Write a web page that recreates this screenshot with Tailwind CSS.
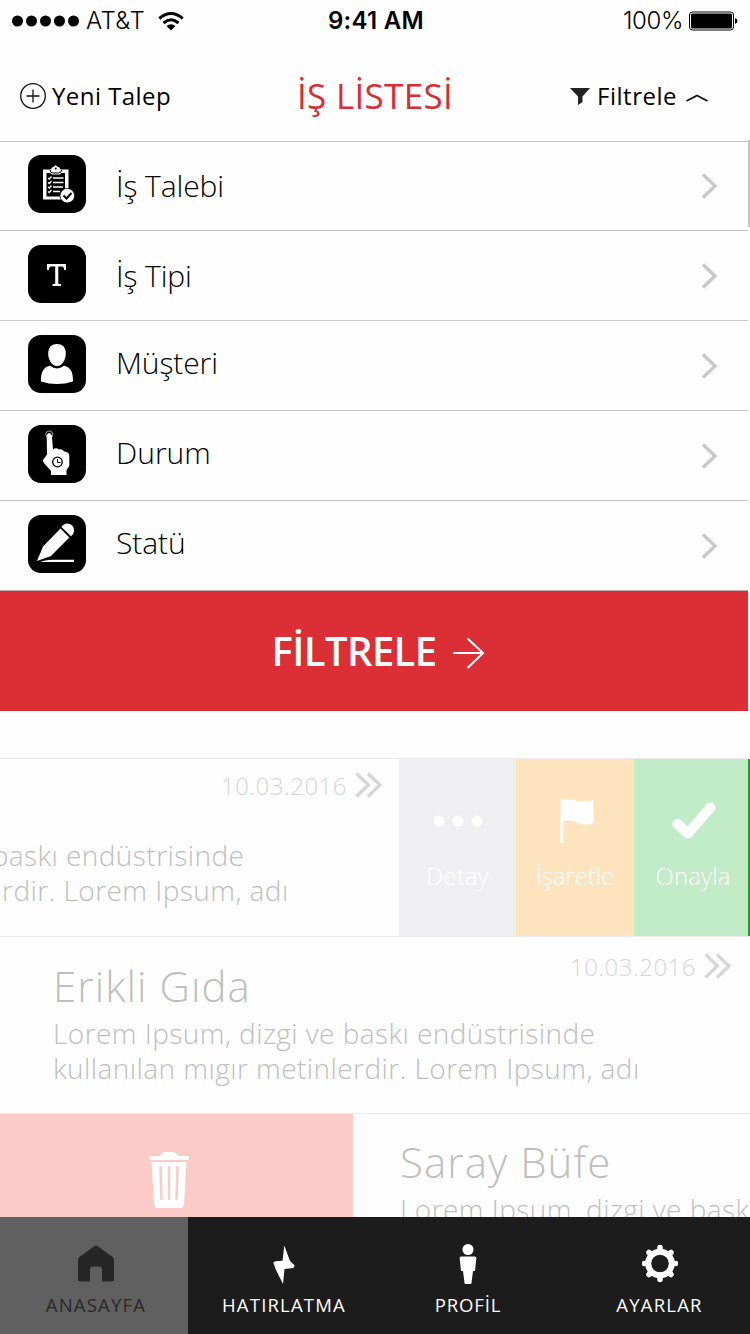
<!DOCTYPE html>
<html lang="tr">
<head>
    <meta charset="UTF-8">
    <meta name="viewport" content="width=device-width, initial-scale=1.0">
    <title>İş Listesi</title>
    <script src="https://cdn.jsdelivr.net/npm/@tailwindcss/browser@4"></script>
</head>
<body class="bg-white font-['Open_Sans',sans-serif] text-black">
    <div class="w-[750px] h-[1334px] flex flex-col overflow-hidden bg-[#fefefe]">

        <!-- Status bar -->
        <div class="h-10 shrink-0 grid grid-cols-3 items-center pt-0.5 pl-3 pr-3 font-['Inter',sans-serif] text-2xl">
            <div class="flex items-center">
                <svg class="w-[68px] h-3" viewBox="0 0 68 12">
                    <circle cx="5.5" cy="6" r="5.5"/><circle cx="19.5" cy="6" r="5.5"/><circle cx="33.5" cy="6" r="5.5"/><circle cx="47.5" cy="6" r="5.5"/><circle cx="61.5" cy="6" r="5.5"/>
                </svg>
                <span class="ml-1.5 font-[350] tracking-[0.4px]">AT&amp;T</span>
                <svg class="ml-[13px] w-[26px] h-5" viewBox="0 0 26 20" fill="none" stroke="#000" stroke-width="3">
                    <path d="M1.3 7.5 Q13 -2.5 24.7 7.5"/>
                    <path d="M5.5 12 Q13 5.5 20.5 12"/>
                    <path d="M8.5 15 Q13 11.5 17.5 15 L13 19.5 Z" fill="#000" stroke="none"/>
                </svg>
            </div>
            <div class="pl-0.5 text-center font-semibold tracking-[0.3px]">9:41 AM</div>
            <div class="flex items-center justify-end">
                <span class="font-[350] tracking-[-0.4px]">100%</span>
                <svg class="ml-1.5 w-[49px] h-5" viewBox="0 0 49 20">
                    <rect x="0.5" y="1" width="44" height="18" rx="3" fill="none" stroke="#000"/>
                    <rect x="2" y="2.5" width="41" height="15" rx="1.5"/>
                    <path d="M46 7 Q48.5 8 48.5 10 Q48.5 12 46 13 Z"/>
                </svg>
            </div>
        </div>

        <!-- Header -->
        <div class="h-[102px] shrink-0 grid grid-cols-[1fr_auto_1fr] items-center pl-5 pr-10 pt-[11px] border-b border-[#c6c6c6] w-[748px]">
            <div class="flex items-center">
                <svg class="w-[26px] h-[26px]" viewBox="0 0 26 26" fill="none" stroke="#111" stroke-width="1.3">
                    <circle cx="13" cy="13" r="12.3"/><path d="M13 6.5V19.5M6.5 13H19.5"/>
                </svg>
                <span class="ml-1.5 text-2xl font-medium tracking-[0.45px] whitespace-nowrap">Yeni Talep</span>
            </div>
            <h1 class="pl-[22px] text-center text-[35px] font-medium tracking-[0.3px] text-[#dc2b35] whitespace-nowrap">İŞ LİSTESİ</h1>
            <div class="flex items-center justify-end">
                <svg class="w-5 h-[17px]" viewBox="0 0 20 17" fill="#222"><path d="M0 0H20L12.5 8.5V14L8 17V8.5Z"/></svg>
                <span class="ml-[7px] text-2xl font-medium tracking-[0.5px]">Filtrele</span>
                <svg class="ml-[9px] mt-1 w-[22px] h-2" viewBox="0 0 22 8" fill="none" stroke="#111" stroke-width="1.8"><path d="M0.5 7L11 1.5L21.5 7"/></svg>
            </div>
        </div>

        <!-- Filter options -->
        <div class="relative shrink-0">
            <div class="w-[748px] text-[30px] font-light tracking-[-0.1px]">
                <div class="h-[89px] flex items-center pl-7 pr-[30px] border-b border-[#c6c6c6]">
                    <svg class="w-[58px] h-[58px] mb-[5px]" viewBox="0 0 58 58">
                        <rect width="58" height="58" rx="13"/>
                        <path d="M15 14.5H23Q23.5 12 26 11.8Q27.5 8.5 29.5 11.8Q32 12 32.5 14.5H40.5V35A8 8 0 0 0 33 44.5H15Z" fill="#fff"/>
                        <path d="M18.5 18H22L24 19.5H31.5L33.5 18H37V34L32 41.5H18.5Z"/>
                        <path d="M25 23H35.5M25 27.5H35.5M25 32H35M25 36.5H32" stroke="#fff" stroke-width="1.6"/>
                        <path d="M20 23L21.3 24L23.5 21.5M20 27.5L21.3 28.5L23.5 26M20 32L21.3 33L23.5 30.5M20 36.5L21.3 37.5L23.5 35" fill="none" stroke="#fff" stroke-width="1.3"/>
                        <circle cx="27.7" cy="13.5" r="1"/>
                        <path d="M22 15Q22 18 25 18H30.5Q33.5 18 33.5 15" fill="none" stroke="#000" stroke-width="1"/>
                        <circle cx="39.3" cy="40.7" r="7.3" fill="#fff" stroke="#000" stroke-width="0.8"/>
                        <path d="M35.5 40.5L38.5 43.5L43.5 38" fill="none" stroke="#000" stroke-width="2"/>
                    </svg>
                    <span class="ml-[30px] pb-px grow">İş Talebi</span>
                    <svg class="w-[17px] h-[26px]" viewBox="0 0 17 26" fill="none" stroke="#c7c7cc" stroke-width="3.2"><path d="M2 1.5L14 13L2 24.5"/></svg>
                </div>
                <div class="h-[90px] flex items-center pl-7 pr-[30px] border-b border-[#c6c6c6]">
                    <svg class="w-[58px] h-[58px] mb-[3px]" viewBox="0 0 58 58">
                        <rect width="58" height="58" rx="13"/>
                        <path d="M19 19H38V25H36.2Q36 21.5 34 21.5H30.3V38.7L33 39.2V41H24.5V39.2L27.2 38.7V21.5H23Q21 21.5 20.8 25H19Z" fill="#fff"/>
                    </svg>
                    <span class="ml-[30px] grow">İş Tipi</span>
                    <svg class="w-[17px] h-[26px]" viewBox="0 0 17 26" fill="none" stroke="#c7c7cc" stroke-width="3.2"><path d="M2 1.5L14 13L2 24.5"/></svg>
                </div>
                <div class="h-[90px] flex items-center pl-7 pr-[30px] border-b border-[#c6c6c6]">
                    <svg class="w-[58px] h-[58px] mb-[3px]" viewBox="0 0 58 58">
                        <rect width="58" height="58" rx="13"/>
                        <path d="M29 9C34 9 37.8 12 37.8 18.5C37.8 25 34 31 29 31C24 31 20.2 25 20.2 18.5C20.2 12 24 9 29 9Z" fill="#fff"/>
                        <path d="M13 46.5C13 37 15 32.5 22 30.8Q29 36 36 30.8C43 32.5 45 37 45 46.5Q37 49 29 49Q21 49 13 46.5Z" fill="#fff"/>
                    </svg>
                    <span class="ml-[30px] pb-1.5 grow">Müşteri</span>
                    <svg class="w-[17px] h-[26px]" viewBox="0 0 17 26" fill="none" stroke="#c7c7cc" stroke-width="3.2"><path d="M2 1.5L14 13L2 24.5"/></svg>
                </div>
                <div class="h-[90px] flex items-center pl-7 pr-[30px] border-b border-[#c6c6c6]">
                    <svg class="w-[58px] h-[58px] mb-[3px]" viewBox="0 0 58 58">
                        <rect width="58" height="58" rx="13"/>
                        <circle cx="21.3" cy="9.5" r="3.5" fill="none" stroke="#aaa" stroke-width="0.9"/>
                        <path d="M18.7 10Q21.3 6 23.8 10L25 24.5Q28 22 31 24.5Q34 23.5 36 26.5Q41 26.5 41.3 31V41L38.5 45V50H23V46L15.5 37.5L15 35L19 29.5Z" fill="#fff"/>
                        <circle cx="29.5" cy="37" r="4.8" fill="none" stroke="#000" stroke-width="1.3"/>
                        <path d="M29.5 34V37.5H32.5" fill="none" stroke="#000"/>
                    </svg>
                    <span class="ml-[30px] pb-1.5 grow tracking-normal">Durum</span>
                    <svg class="w-[17px] h-[26px]" viewBox="0 0 17 26" fill="none" stroke="#c7c7cc" stroke-width="3.2"><path d="M2 1.5L14 13L2 24.5"/></svg>
                </div>
                <div class="h-[90px] flex items-center pl-7 pr-[30px] border-b border-[#c6b0b0]">
                    <svg class="w-[58px] h-[58px] mb-[3px]" viewBox="0 0 58 58">
                        <rect width="58" height="58" rx="13"/>
                        <path d="M9 46L15 31.5L32.5 13.5L41.3 22.5L23 41Z" fill="#fff"/>
                        <path d="M33.5 12Q35.5 8.5 39.5 8.5Q46.5 9.5 46 16Q46 19 43 21.3Z" fill="#fff"/>
                        <path d="M17 45.5Q21 44.7 25 44.7H46V47H12Z" fill="#fff"/>
                    </svg>
                    <span class="ml-[30px] pb-1.5 grow">Statü</span>
                    <svg class="w-[17px] h-[26px]" viewBox="0 0 17 26" fill="none" stroke="#c7c7cc" stroke-width="3.2"><path d="M2 1.5L14 13L2 24.5"/></svg>
                </div>
            </div>
            <!-- Scroll indicator -->
            <div class="absolute right-0 -top-0.5 w-0.5 h-[87px] bg-[#c4c4c8]"></div>
        </div>

        <button class="w-[748px] h-[120px] shrink-0 flex items-center justify-center pl-2 bg-[#db2e35] text-white">
            <span class="text-[40px] font-semibold tracking-[-0.6px]">FİLTRELE</span>
            <svg class="ml-4 mt-[3px] w-8 h-8" viewBox="0 0 32 32" fill="none" stroke="#fff" stroke-width="2"><path d="M0 16H30M14.5 1.5L30 16L14.5 31"/></svg>
        </button>

        <!-- Faded job list -->
        <div class="mt-[47px] shrink-0 flex border-t border-b border-[#ececec] h-[179px] overflow-hidden text-[#bfbfbf] font-light">
            <div class="w-[399px] shrink-0 pt-[9px]">
                <div class="flex items-center justify-end pr-[17px] text-[#d6d6d6]">
                    <span class="text-2xl leading-9 tracking-[0.5px]">10.03.2016</span>
                    <svg class="ml-2 w-[27px] h-[26px] -mt-0.5" viewBox="0 0 27 26" fill="none" stroke="#d6d6d6" stroke-width="3.2"><path d="M1.5 1.5L13.5 13L1.5 24.5M13 1.5L25 13L13 24.5"/></svg>
                </div>
                <p class="-ml-[298px] pt-[34px] text-[28px] leading-[35px] tracking-[0.44px] whitespace-nowrap"><span class="block">Lorem Ipsum, dizgi ve baskı endüstrisinde</span><span class="block">kullanılan mıgır metinlerdir. Lorem Ipsum, adı</span></p>
            </div>
            <div class="w-[117px] shrink-0 flex flex-col items-center bg-[#efeff1] text-white text-2xl">
                <svg class="mt-10 w-[52px] h-11" viewBox="0 0 52 44" fill="#fff"><circle cx="7" cy="22" r="5.5"/><circle cx="26" cy="22" r="5.5"/><circle cx="45" cy="22" r="5.5"/></svg>
                <span class="mt-[17px] tracking-[0.1px]">Detay</span>
            </div>
            <div class="w-[118px] shrink-0 flex flex-col items-center bg-[#fee3bf] text-white text-2xl">
                <svg class="mt-10 ml-1 w-9 h-11" viewBox="0 0 36 44" fill="#fff"><path d="M1.5 1Q9 -0.5 15 1Q25 4 34.5 1V24Q26 27 19 24Q11 20.5 4.5 22V43Q3 46 1.5 43Z"/></svg>
                <span class="mt-[17px] tracking-[-0.1px]">İşaretle</span>
            </div>
            <div class="w-[114px] shrink-0 flex flex-col items-center bg-[#c2ebc8] text-white text-2xl">
                <svg class="mt-10 ml-1.5 w-11 h-11" viewBox="0 0 44 44" fill="none" stroke="#fff" stroke-width="10" stroke-linecap="round" stroke-linejoin="round"><path d="M5.5 25L16 34.5L38.5 8.5"/></svg>
                <span class="mt-[17px] ml-1 tracking-[0.1px]">Onayla</span>
            </div>
            <div class="w-0.5 bg-[#12aa2a]"></div>
        </div>

        <div class="shrink-0 relative h-[177px] border-b border-[#ececec] pl-[53px] pt-[19px] text-[#bfbfbf] font-light">
            <h2 class="text-[42px] leading-[60px] tracking-[1.05px]">Erikli Gıda</h2>
            <p class="text-[28px] leading-[35px] tracking-[0.44px] whitespace-nowrap"><span class="block">Lorem Ipsum, dizgi ve baskı endüstrisinde</span><span class="block">kullanılan mıgır metinlerdir. Lorem Ipsum, adı</span></p>
            <div class="absolute top-3 right-[19px] flex items-center text-[#d6d6d6]">
                <span class="text-2xl leading-9 tracking-[0.5px]">10.03.2016</span>
                <svg class="ml-2 w-[27px] h-[26px] -mt-0.5" viewBox="0 0 27 26" fill="none" stroke="#d6d6d6" stroke-width="3.2"><path d="M1.5 1.5L13.5 13L1.5 24.5M13 1.5L25 13L13 24.5"/></svg>
            </div>
        </div>

        <div class="shrink-0 h-[103px] flex overflow-hidden text-[#bfbfbf] font-light">
            <div class="w-[353px] shrink-0 bg-[#fdcbc7] pl-[149px] pt-[38px]">
                <svg class="w-10 h-14" viewBox="0 0 40 56">
                    <path d="M0 4H11Q13 0 16 0H24Q27 0 29 4H40V8H0Z" fill="#fff"/>
                    <path d="M2.5 10H37.5L35 52Q34.5 56 31 56H9Q5.5 56 5 52Z" fill="#fff"/>
                    <path d="M11.5 14L12.5 48M20 14V48M28.5 14L27.5 48" stroke="#fdcbc7" stroke-width="2.5"/>
                </svg>
            </div>
            <div class="pl-[47px] pt-[18px]">
                <h2 class="text-[42px] leading-[60px] tracking-[1.05px]">Saray Büfe</h2>
                <p class="text-[28px] leading-[35px] tracking-[0.44px] whitespace-nowrap">Lorem Ipsum, dizgi ve baskı</p>
            </div>
        </div>

        <!-- Tab bar -->
        <nav class="shrink-0 h-[117px] flex bg-[#1c1c1c] text-white text-[18.5px] leading-7 tracking-[1.2px]">
            <a class="w-[188px] flex flex-col items-center pt-[27px] pl-1 bg-[#606060] text-[#2a2a2a]">
                <svg class="w-9 h-10" viewBox="0 0 36 40" fill="#262626"><path d="M18 1.5Q19 1.5 20 2.5L34 12.5Q36 14 36 16V35Q36 37.5 33.5 37.5H24V25.5Q24 22.5 21 22.5H15Q12 22.5 12 25.5V37.5H2.5Q0 37.5 0 35V16Q0 14 2 12.5L16 2.5Q17 1.5 18 1.5Z"/></svg>
                <span class="mt-[7px]">ANASAYFA</span>
            </a>
            <a class="w-[190px] flex flex-col items-center pt-[27px] pl-0.5">
                <svg class="w-[22px] h-10" viewBox="0 0 22 40" fill="#fff"><path d="M11.3 1.5L17 17L21.7 21.5L20.5 24L11.5 25L10 40L3 26L0.3 18.5Q1 17 9.5 16.8Z"/></svg>
                <span class="mt-[7px]">HATIRLATMA</span>
            </a>
            <a class="w-[180px] flex flex-col items-center pt-[27px]">
                <svg class="w-[18px] h-10" viewBox="0 0 18 40" fill="#fff"><circle cx="9" cy="5.5" r="5.5"/><path d="M2 12.5H16Q17.5 12.5 17.3 14.5L16 27H14L12.5 39Q12.4 40 11.5 40H6.5Q5.6 40 5.5 39L4 27H2L0.7 14.5Q0.5 12.5 2 12.5Z"/></svg>
                <span class="mt-[7px] tracking-[0.9px]">PROFİL</span>
            </a>
            <a class="grow flex flex-col items-center pt-[27px] pl-[11px]">
                <svg class="w-9 h-10" viewBox="0 0 36 40" fill="none" stroke="#fff">
                    <circle cx="18" cy="19.5" r="11.8" stroke-width="6"/>
                    <path d="M18 3.5V7M18 32V35.5M2.5 19.5H5.5M30.5 19.5H33.5M7 8.5L9 10.5M27 28.5L29 30.5M7 30.5L9 28.5M27 10.5L29 8.5" stroke-width="5.5" stroke-linecap="round"/>
                </svg>
                <span class="mt-[7px]">AYARLAR</span>
            </a>
        </nav>
    </div>
</body>
</html>
